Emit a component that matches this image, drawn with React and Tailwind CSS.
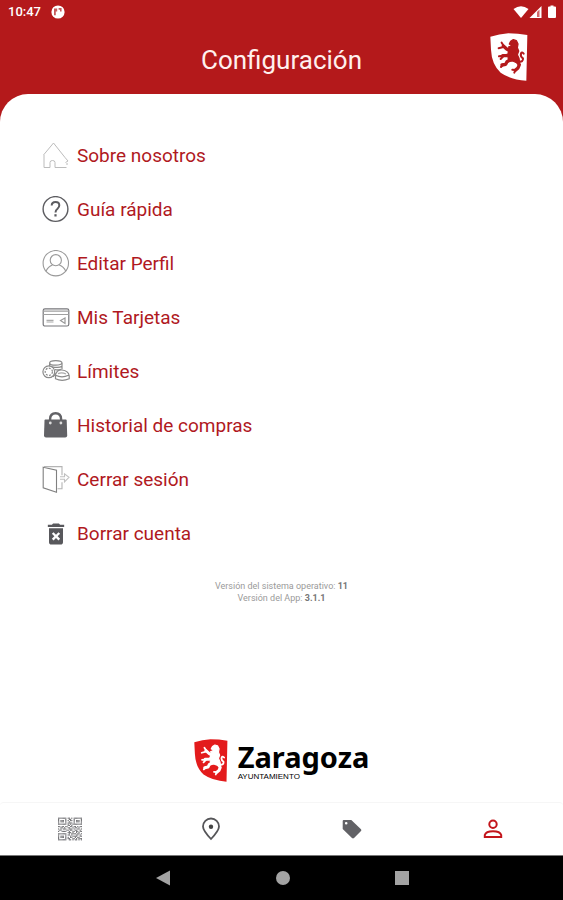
import { MdDeleteForever } from 'react-icons/md';

const QR_ROWS = [
  '11111110110101111111',
  '10000010011001000001',
  '10111010101101011101',
  '10111010010001011101',
  '10000010111101000001',
  '11111110101011111111',
  '00000000110100000000',
  '11011011001101101011',
  '00110100110010110100',
  '10101110011101001101',
  '01100001101100110010',
  '10011110010011011011',
  '00000000111010010100',
  '11111110010111101101',
  '10000010110100011010',
  '10111010001011110011',
  '10111010101100101100',
  '10000010110011010111',
  '11111110011010110101',
];

function Shield({ className, shieldFill, lionFill }) {
  return (
    <svg viewBox="0 0 114 144" className={className} aria-hidden="true">
      <path d="M1 11 Q28 3 55 1 Q84 1 112 6 L109 143 Q62 140 32 119 Q5 94 3 50Z" fill={shieldFill} />
      <g fill={lionFill} stroke={lionFill} strokeLinejoin="round" strokeLinecap="round">
        <path strokeWidth="4" d="M62 25 L70 20 L79 23 L84 33 L82 44 L86 54 L82 65 L87 76 L89 90 L78 88 L68 84 L56 84 L54 72 L59 65 L54 57 L58 48 L56 42 L67 39 L58 33Z" />
        <path fill="none" strokeWidth="10" d="M64 50 L51 49 L40 39 M62 61 L50 68 L38 68 M62 80 L51 86 L47 94 L36 96 M80 84 L88 95 L84 105 L76 112" />
        <path fill="none" strokeWidth="6" d="M42 40 L35 29 M40 42 L26 46 M40 68 L27 70 M40 70 L32 78 M40 94 L33 102 M77 111 L67 110 M76 112 L73 119" />
        <path fill="none" strokeWidth="6" d="M86 86 Q100 88 99 76 Q90 71 93 61 Q96 56 101 62" />
      </g>
    </svg>
  );
}

function HomeIcon() {
  return (
    <svg viewBox="0 0 28 28" className="size-7" fill="none" stroke="#bcbcbc" strokeWidth="1">
      <path d="M1.5 13 L11.5 1 L23 15.5 M2 13 V25.5 H8 V20.5 Q8 18.5 10.5 18.5 Q13 18.5 13 20.5 V25.5 H24.5 M23 15.5 L26 19 L23.5 20.5 M25 21 V23" />
    </svg>
  );
}

function HelpIcon() {
  return (
    <svg viewBox="0 0 28 28" className="size-7" fill="none" stroke="#5c5c60" strokeWidth="1.4">
      <circle cx="13.5" cy="13" r="12.4" />
      <path strokeWidth="2" d="M9.7 9.5 Q9.7 6 13.5 6 Q17.3 6 17.3 9.3 Q17.3 11.2 15.5 12.7 Q13.5 14.2 13.5 16.5" />
      <path strokeWidth="2.2" d="M13.5 18.2 V20.5" />
    </svg>
  );
}

function ProfileIcon() {
  return (
    <svg viewBox="0 0 28 28" className="size-7" fill="none" stroke="#999" strokeWidth="1.1">
      <circle cx="13.8" cy="13.2" r="12.7" />
      <circle cx="13.8" cy="10.2" r="5.6" />
      <path d="M4 21.2 Q6 16.7 10.5 15 M17.2 15 Q21.8 16.7 23.8 21.2" />
    </svg>
  );
}

function CardIcon() {
  return (
    <svg viewBox="0 0 28 28" className="size-7" fill="none" stroke="#77777b" strokeWidth="1.2">
      <rect x="1.2" y="4.8" width="25.6" height="17.2" rx="1.8" />
      <path d="M1 7.2 H27 M1 10.5 H27" stroke="#a0a0a0" />
      <path d="M4.5 16.3 H11.5 M4.5 18 H11.5" stroke="#aaa" />
      <path d="M23 14 L18.5 16.5 L23 19.5Z" stroke="#999" />
    </svg>
  );
}

function CoinsIcon() {
  return (
    <svg viewBox="0 0 28 28" className="size-7" fill="none" stroke="#8a8a8a" strokeWidth="1.2">
      <ellipse cx="13.8" cy="4.9" rx="6.2" ry="2.3" />
      <path d="M7.6 5.3 V8.3 M20 5.3 V11.3 M10 8.8 Q17 10.3 20 8.3 M13 11.6 Q16 12.3 19 11.3" />
      <circle cx="6.8" cy="13.8" r="5.9" />
      <circle cx="6.8" cy="13.8" r="3.6" strokeDasharray="2 1.3" />
      <path d="M13.5 16.8 Q15 11.6 20 12 Q26.5 12.8 27.2 17.8 V20.8 Q20 23.8 13.5 20.8 V17.3 Q20 20.3 26.5 17.3 M11 18.8 L15 13.8" />
      <path d="M16 15.6 Q20 13.8 24 16.1" stroke="#aaa" />
    </svg>
  );
}

function BagIcon() {
  return (
    <svg viewBox="0 0 28 28" className="size-7">
      <path d="M8.1 11 V7 Q8.3 1.3 13.6 1.3 Q18.9 1.3 19.1 7 V11" fill="none" stroke="#626266" strokeWidth="2.4" />
      <path d="M3.4 7.5 H23.8 Q24.6 7.5 24.7 8.5 L25.2 23.5 Q25.2 25.5 23.2 25.5 H4 Q2 25.5 2 23.5 L2.5 8.5 Q2.6 7.5 3.4 7.5Z" fill="#626266" />
      <circle cx="8.3" cy="11" r="1.4" fill="#ddd" />
      <circle cx="18.9" cy="11" r="1.4" fill="#ddd" />
    </svg>
  );
}

function DoorIcon() {
  return (
    <svg viewBox="0 0 28 28" className="size-7" fill="none" stroke="#808080" strokeWidth="1.1">
      <path d="M1.2 1.3 L14.5 4.3 V26.3 L1.2 21.8Z" />
      <path d="M2 0.6 H20 V9.3 M20 16.3 V22.8 H15.5" stroke="#b4b4b4" />
      <path d="M18 10.8 H22.5 V7.8 L27 11.3 L22.5 15.8 V13.3 H18" stroke="#c0c0c0" />
    </svg>
  );
}

function TrashIcon() {
  return <MdDeleteForever className="size-7 text-[#58585c]" />;
}

const MENU = [
  { label: 'Sobre nosotros', Icon: HomeIcon },
  { label: 'Guía rápida', Icon: HelpIcon },
  { label: 'Editar Perfil', Icon: ProfileIcon },
  { label: 'Mis Tarjetas', Icon: CardIcon },
  { label: 'Límites', Icon: CoinsIcon },
  { label: 'Historial de compras', Icon: BagIcon },
  { label: 'Cerrar sesión', Icon: DoorIcon },
  { label: 'Borrar cuenta', Icon: TrashIcon },
];

function StatusBar() {
  return (
    <div className="flex h-6 items-center justify-between pl-2 pr-1.5 text-white">
      <div className="flex items-center gap-2.5">
        <span className="text-[13px] font-medium">10:47</span>
        <svg viewBox="0 0 14 14" className="size-3.5" aria-hidden="true">
          <circle cx="7" cy="7" r="6.6" fill="#fff" />
          <path d="M3 3.6 H6.2 V6.6 H4.8 V10.2 H3Z M7.6 3 H10.6 V6.4 H9 V4.8 H7.6Z" fill="#c65a5c" />
        </svg>
      </div>
      <svg viewBox="0 0 44 14" className="h-3.5 w-11" fill="#fff" aria-hidden="true">
        <path d="M0.5 4 Q8 -1.5 15.5 4 L8 13Z" />
        <path d="M28.5 1 V13 H16.5Z" />
        <path d="M24 7 L26.5 4.5 V12 H24Z" fill="#d0696b" />
        <path d="M36 1.5 H37.5 V0.5 H40.5 V1.5 H42 Q43 1.5 43 2.5 V12 Q43 13 42 13 H36 Q35 13 35 12 V2.5 Q35 1.5 36 1.5Z" />
      </svg>
    </div>
  );
}

function TabBar() {
  return (
    <nav className="grid h-[53px] grid-cols-4 rounded-t border-t border-[#f6f6f6] bg-white">
      <button aria-label="Código QR" className="flex items-center justify-center">
        <svg viewBox="0 0 20 19" className="size-6" fill="#77777a">
          {QR_ROWS.map((row, y) =>
            row.split('').map((cell, x) =>
              cell === '1' ? <rect key={`${x}-${y}`} x={x} y={y} width="1" height="1" /> : null
            )
          )}
        </svg>
      </button>
      <button aria-label="Mapa" className="flex items-center justify-center">
        <svg viewBox="0 0 20 24" className="h-6 w-5" fill="none" stroke="#555558" strokeWidth="1.8">
          <path d="M10 22 Q2 13.5 2 9.5 A8 8 0 0 1 18 9.5 Q18 13.5 10 22Z" />
          <circle cx="10" cy="9.7" r="2.2" fill="#444" stroke="none" />
        </svg>
      </button>
      <button aria-label="Ofertas" className="flex items-center justify-center">
        <svg viewBox="0 0 20 20" className="size-5" fill="#626266">
          <path fillRule="evenodd" d="M0.7 2 Q0.7 1 1.7 1 H9.3 L19 10.3 Q19.8 11.2 19 12 L12 19 Q11 19.8 10 19 L0.7 10Z M4.2 3 A1.3 1.3 0 1 0 4.2 5.6 A1.3 1.3 0 1 0 4.2 3Z" />
        </svg>
      </button>
      <button aria-label="Perfil" aria-current="page" className="flex items-center justify-center">
        <svg viewBox="0 0 20 20" className="size-5" fill="none" stroke="#c3151b" strokeWidth="2">
          <circle cx="10" cy="5.3" r="3.7" />
          <path d="M1.8 18 V16 Q3 12.2 10 12.2 Q17 12.2 18.2 16 V18Z" />
        </svg>
      </button>
    </nav>
  );
}

function SystemBar() {
  return (
    <div className="flex h-[45px] items-center justify-center gap-[105px] border-t border-[#777] bg-black">
      <button aria-label="Atrás">
        <svg viewBox="0 0 16 16" className="size-4" fill="#a3a3a3">
          <path d="M1 8 L15 0.5 V15.5Z" />
        </svg>
      </button>
      <button aria-label="Inicio" className="size-3.5 rounded-full bg-[#a3a3a3]" />
      <button aria-label="Recientes" className="size-3.5 bg-[#a3a3a3]" />
    </div>
  );
}

export default function App() {
  return (
    <div className="flex min-h-screen flex-col bg-[#b4191b] font-['Roboto',sans-serif]">
      <StatusBar />
      <header className="grid h-[70px] grid-cols-[1fr_auto_1fr] items-center px-[35px]">
        <h1 className="col-start-2 pt-0.5 text-[26px] text-[#fff0ee]">Configuración</h1>
        <Shield className="mb-1 h-12 w-[38px] justify-self-end" shieldFill="#fff" lionFill="#b4191b" />
      </header>

      <main className="flex flex-1 flex-col items-center rounded-t-[28px] bg-white pt-[35px]">
        <ul className="w-full px-[42px]">
          {MENU.map(({ label, Icon }) => (
            <li key={label}>
              <button className="flex h-[54px] w-full items-center gap-[7px] text-left text-[19px] text-[#b0191e]">
                <Icon />
                {label}
              </button>
            </li>
          ))}
        </ul>

        <div className="mt-[19px] text-center text-[9px] leading-3 text-[#9a9a9a]">
          <p>Versión del sistema operativo: <b className="text-[#777]">11</b></p>
          <p>Versión del App: <b className="text-[#777]">3.1.1</b></p>
        </div>

        <div className="mt-auto mb-5 flex items-center gap-2.5">
          <Shield className="h-[43px] w-[34px]" shieldFill="#e31b1c" lionFill="#fff" />
          <div className="text-black">
            <p className="font-['Noto_Sans',sans-serif] text-[29px] leading-8 font-bold">Zaragoza</p>
            <p className="font-['Liberation_Sans',sans-serif] text-[8px] leading-2">AYUNTAMIENTO</p>
          </div>
        </div>
      </main>

      <div className="bg-white">
        <TabBar />
      </div>
      <SystemBar />
    </div>
  );
}
